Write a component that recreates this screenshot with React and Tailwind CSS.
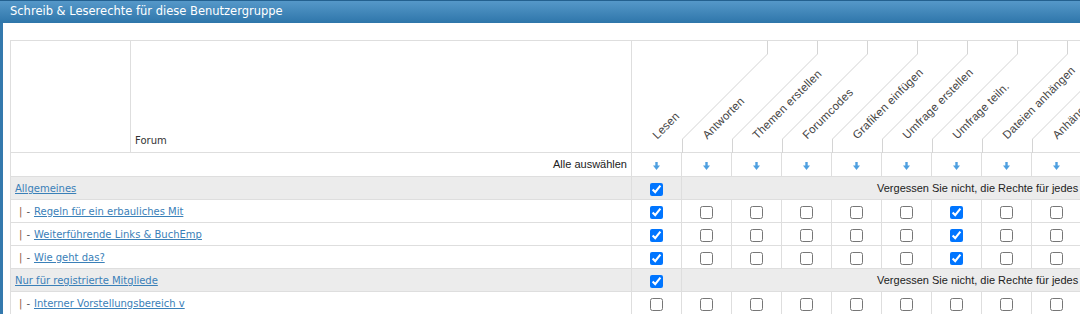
import React from "react";

const COLS = [
  "Lesen",
  "Antworten",
  "Themen erstellen",
  "Forumcodes",
  "Grafiken einfügen",
  "Umfrage erstellen",
  "Umfrage teiln.",
  "Dateien anhängen",
  "Anhänge herunterladen",
  "Bearbeiten",
  "Löschen",
];

const ROWS = [
  { type: "cat", name: "Allgemeines", read: true },
  { type: "sub", name: "Regeln für ein erbauliches Mit", checks: [0, 6] },
  { type: "sub", name: "Weiterführende Links & BuchEmp", checks: [0, 6] },
  { type: "sub", name: "Wie geht das?", checks: [0, 6] },
  { type: "cat", name: "Nur für registrierte Mitgliede", read: true },
  { type: "sub", name: "Interner Vorstellungsbereich v", checks: [] },
];

function Arrow() {
  return (
    <svg width="7" height="8" viewBox="0 0 7 8" className="inline-block align-middle">
      <rect x="2.3" y="0" width="2.4" height="4" fill="#4d9fe0" />
      <polygon points="0,3.6 7,3.6 3.5,8" fill="#4d9fe0" />
    </svg>
  );
}

function Box({ checked }) {
  return (
    <input
      type="checkbox"
      defaultChecked={checked}
      className="m-0 align-middle w-[13px] h-[13px]"
    />
  );
}

const cell = "border border-[#dedede]";

export default function App() {
  return (
    <div className="w-[1080px] h-[314px] overflow-hidden bg-white">
      <div className="h-[23px] bg-linear-to-b from-[#5598c9] to-[#2e76aa] border-t border-[#23608f] pl-[10px] flex items-center text-white text-[11.5px] font-['DejaVu_Sans',Verdana,sans-serif]">
        Schreib &amp; Leserechte für diese Benutzergruppe
      </div>
      <div className="border-l-[3px] border-[#3479ad] pl-[7px] pt-[17px]">
        <table className="border-collapse table-fixed w-[1171px] text-[#333]">
          <colgroup>
            <col className="w-[120px]" />
            <col className="w-[501px]" />
            {COLS.map((c) => (
              <col key={c} className="w-[50px]" />
            ))}
          </colgroup>
          <thead>
            <tr>
              <th className={`${cell} h-[112px]`}></th>
              <th className={`${cell} align-bottom text-left font-normal pl-[4px] pb-[4px] text-[10px] font-['DejaVu_Sans',Verdana,sans-serif]`}>
                Forum
              </th>
              {COLS.map((c, i) => (
                <th
                  key={c}
                  className="relative border-t border-b border-[#dedede] p-0 font-normal"
                >
                  {i > 0 && (
                    <svg
                      width="86"
                      height="112"
                      className="absolute left-0 top-0 overflow-visible pointer-events-none"
                    >
                      <polyline
                        points="0.5,112 0.5,98 85.5,13 85.5,0"
                        fill="none"
                        stroke="#d4d4d4"
                        strokeWidth="1"
                      />
                    </svg>
                  )}
                  <div className="absolute left-[27px] bottom-[11px] origin-bottom-left -rotate-45 whitespace-nowrap leading-none text-[11.5px] tracking-[0.2px] text-[#444] font-['Liberation_Sans',Arial,sans-serif]">
                    {c}
                  </div>
                </th>
              ))}
            </tr>
          </thead>
          <tbody>
            <tr>
              <td
                colSpan={2}
                className={`${cell} h-[24px] text-right pr-[4px] text-[11px] text-[#222] font-['Liberation_Sans',Arial,sans-serif]`}
              >
                Alle auswählen
              </td>
              {COLS.map((c) => (
                <td key={c} className={`${cell} text-center leading-none`}>
                  <Arrow />
                </td>
              ))}
            </tr>
            {ROWS.map((r) =>
              r.type === "cat" ? (
                <tr key={r.name} className="bg-[#ececec]">
                  <td
                    colSpan={2}
                    className={`${cell} h-[23px] pl-[4px] text-[10px] font-['DejaVu_Sans',Verdana,sans-serif]`}
                  >
                    <a href="#" className="text-[#3a80b8] underline">
                      {r.name}
                    </a>
                  </td>
                  <td className={`${cell} text-center leading-none`}>
                    <Box checked={r.read} />
                  </td>
                  <td
                    colSpan={COLS.length - 1}
                    className={`${cell} pl-[195px] whitespace-nowrap text-[11px] text-[#222] font-['Liberation_Sans',Arial,sans-serif]`}
                  >
                    Vergessen Sie nicht, die Rechte für jedes Unterforum einzeln festzulegen.
                  </td>
                </tr>
              ) : (
                <tr key={r.name}>
                  <td
                    colSpan={2}
                    className={`${cell} h-[23px] pl-[8px] text-[10px] font-['DejaVu_Sans',Verdana,sans-serif]`}
                  >
                    <span className="text-[#8a5a3c]">|</span>
                    <span className="text-[#555] ml-[4px]">-</span>
                    <a href="#" className="text-[#3a80b8] underline ml-[4px]">
                      {r.name}
                    </a>
                  </td>
                  {COLS.map((c, i) => (
                    <td key={c} className={`${cell} text-center leading-none`}>
                      <Box checked={r.checks.includes(i)} />
                    </td>
                  ))}
                </tr>
              )
            )}
          </tbody>
        </table>
      </div>
    </div>
  );
}
